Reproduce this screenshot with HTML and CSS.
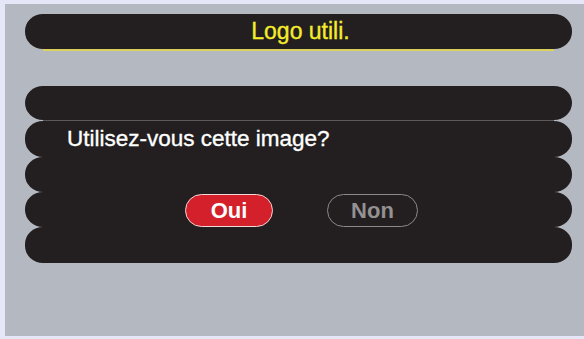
FILE: index.html
```html
<!DOCTYPE html>
<html lang="fr">
<head>
<meta charset="utf-8">
<title>Logo utili.</title>
<link rel="stylesheet" href="styles.css">
</head>
<body>
<div class="panel">
  <div class="title-bar"><span class="title">Logo utili.</span></div>
  <div class="rows">
    <div class="row row-1"></div>
    <div class="sep"></div>
    <div class="row row-2"><span class="question">Utilisez-vous cette image?</span></div>
    <div class="row row-3"></div>
    <div class="row row-4">
      <button class="btn btn-yes">Oui</button>
      <button class="btn btn-no">Non</button>
    </div>
    <div class="row row-5"></div>
  </div>
</div>
</body>
</html>
```

FILE: styles.css
```css
html, body {
  margin: 0;
  padding: 0;
  background: #e5e7f9;
  width: 584px;
  height: 339px;
  overflow: hidden;
  font-family: "Liberation Sans", Arial, sans-serif;
}

.panel {
  margin: 4px 0 0 5px;
  height: 332px;
  background: #b4b9c1;
  padding: 10px 12px 0 20px;
  box-sizing: border-box;
  display: flex;
  flex-direction: column;
}

.title-bar {
  position: relative;
  height: 35px;
  background: #231f20;
  border-radius: 18px / 17px;
  display: flex;
  align-items: center;
  justify-content: center;
}

.title-bar::after {
  content: "";
  position: absolute;
  left: 18px;
  right: 18px;
  bottom: -2px;
  height: 2px;
  background: #d9d15a;
}

.title {
  color: #f5ec2c;
  font-size: 23px;
  line-height: 1;
  padding-left: 4px;
  -webkit-text-stroke: 0.35px #f5ec2c;
}

.rows {
  margin-top: 37px;
  display: flex;
  flex-direction: column;
}

.row {
  background: #231f20;
  border-radius: 18px / 17px;
  display: flex;
  align-items: center;
}

.row-1 { height: 34px; }
.row-2 { height: 36px; }
.row-3 { height: 35px; }
.row-4 { height: 35px; justify-content: center; gap: 54px; padding-left: 6px; padding-top: 2px; box-sizing: border-box; }
.row-5 { height: 36px; }

.sep {
  height: 1px;
  margin: 0 18px;
  background: #5d595a;
}

.question {
  color: #ffffff;
  font-size: 22.5px;
  padding-left: 42px;
  line-height: 1;
  -webkit-text-stroke: 0.35px #ffffff;
}

.btn {
  font-family: "Liberation Sans", Arial, sans-serif;
  font-weight: bold;
  font-size: 22px;
  height: 33px;
  border-radius: 17px;
  padding: 0;
  display: flex;
  align-items: center;
  justify-content: center;
  box-sizing: border-box;
}

.btn-yes {
  width: 88px;
  background: #d3202a;
  color: #ffffff;
  border: 1.5px solid #f3d6d6;
}

.btn-no {
  width: 91px;
  background: #231f20;
  color: #939192;
  border: 1.5px solid #8c898a;
}
```
